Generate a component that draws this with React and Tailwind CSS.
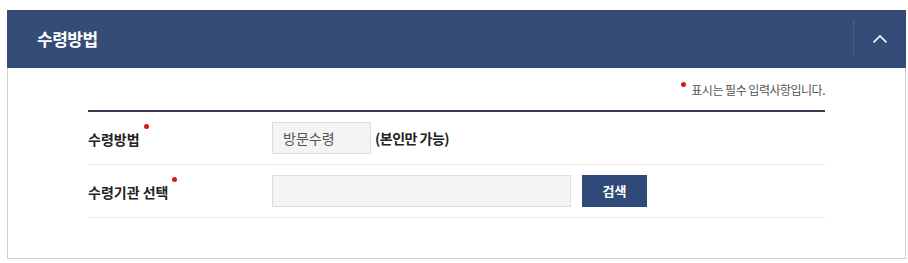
import React from "react";

function RequiredDot() {
  return <span className="absolute -top-[5px] -right-[9px] w-[5px] h-[5px] rounded-full bg-[#d7191f]" />;
}

function FormRow({ label, children }) {
  return (
    <div className="flex items-center h-[53px] border-b border-[#ebebeb]">
      <div className="w-[184px] shrink-0">
        <span className="relative inline-block text-[14px] font-bold text-[#222] leading-none pt-[3px]">
          {label}
          <RequiredDot />
        </span>
      </div>
      <div className="flex items-center">{children}</div>
    </div>
  );
}

export default function App() {
  return (
    <div className="bg-white w-[908px] h-[263px] pt-[10px] pl-[7px] font-['Noto_Sans_CJK_KR','Noto_Sans',sans-serif]">
      <div className="w-[899px] h-[249px] border border-[#cfcfcf] border-t-0">
        <div className="flex items-center h-[58px] bg-[#344c77] -ml-px -mr-px">
          <h2 className="flex-1 pl-[30px] text-[17px] font-bold text-white tracking-[-0.5px]">수령방법</h2>
          <div className="h-[38px] w-px bg-[#4a6089]" />
          <button className="w-[52px] h-full flex items-center justify-center">
            <svg width="16" height="10" viewBox="0 0 16 10" fill="none">
              <path d="M1.5 8.5 L8 2 L14.5 8.5" stroke="white" strokeWidth="1.6" />
            </svg>
          </button>
        </div>
        <div className="px-[80px]">
          <div className="flex justify-end items-center h-[42px] pt-[1px]">
            <span className="relative text-[12px] text-[#555] tracking-[-0.5px]">
              <span className="absolute -left-[10px] top-[1px] w-[5px] h-[5px] rounded-full bg-[#d7191f]" />
              표시는 필수 입력사항입니다.
            </span>
          </div>
          <div className="border-t-2 border-[#333d52]">
            <FormRow label="수령방법">
              <div className="w-[99px] h-[32px] flex items-center pl-[10px] bg-[#f4f4f4] border border-[#dcdcdc] text-[14px] text-[#555]">
                방문수령
              </div>
              <span className="ml-[4px] text-[14px] font-bold text-[#222] tracking-[-0.5px]">(본인만 가능)</span>
            </FormRow>
            <FormRow label="수령기관 선택">
              <input className="w-[299px] h-[32px] bg-[#f4f4f4] border border-[#dcdcdc] outline-none" readOnly />
              <button className="ml-[11px] w-[65px] h-[32px] bg-[#2f4a78] text-white text-[13px] font-bold">검색</button>
            </FormRow>
          </div>
        </div>
      </div>
    </div>
  );
}
